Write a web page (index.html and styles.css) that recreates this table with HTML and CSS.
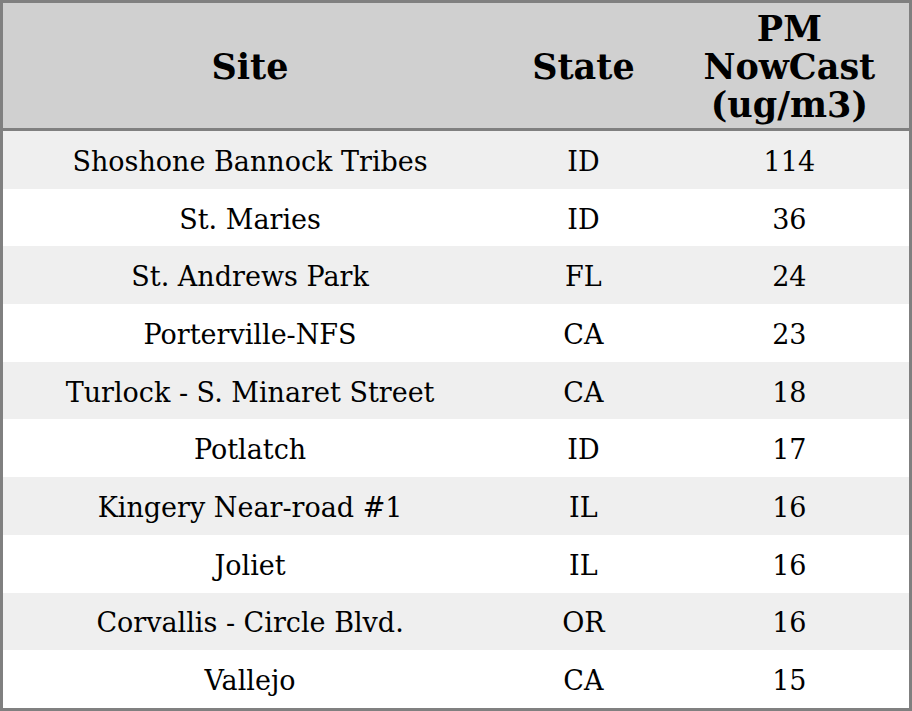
FILE: index.html
```html
<!DOCTYPE html>
<html>
<head>
<meta charset="utf-8">
<link rel="stylesheet" href="styles.css">
</head>
<body>
<table class="aq">
  <colgroup>
    <col class="c-site">
    <col class="c-state">
    <col class="c-pm">
  </colgroup>
  <thead>
    <tr><th>Site</th><th>State</th><th>PM<br>NowCast<br>(ug/m3)</th></tr>
  </thead>
  <tbody>
    <tr><td>Shoshone Bannock Tribes</td><td>ID</td><td>114</td></tr>
    <tr><td>St. Maries</td><td>ID</td><td>36</td></tr>
    <tr><td>St. Andrews Park</td><td>FL</td><td>24</td></tr>
    <tr><td>Porterville-NFS</td><td>CA</td><td>23</td></tr>
    <tr><td>Turlock - S. Minaret Street</td><td>CA</td><td>18</td></tr>
    <tr><td>Potlatch</td><td>ID</td><td>17</td></tr>
    <tr><td>Kingery Near-road #1</td><td>IL</td><td>16</td></tr>
    <tr><td>Joliet</td><td>IL</td><td>16</td></tr>
    <tr><td>Corvallis - Circle Blvd.</td><td>OR</td><td>16</td></tr>
    <tr><td>Vallejo</td><td>CA</td><td>15</td></tr>
  </tbody>
</table>
</body>
</html>
```
FILE: styles.css
```css
html, body {
  margin: 0;
  padding: 0;
  background: #ffffff;
}
.aq {
  width: 912px;
  border-collapse: collapse;
  border: 3px solid #808080;
  font-family: "DejaVu Serif", serif;
  color: #000;
  table-layout: fixed;
}
.c-site { width: 494px; }
.c-state { width: 172px; }
.c-pm { width: 240px; }
.aq th {
  background: #d0d0d0;
  font-size: 35px;
  font-weight: bold;
  line-height: 38px;
  padding: 7px 0 4px;
  text-align: center;
  vertical-align: middle;
  border-bottom: 3px solid #808080;
}
.aq td {
  font-size: 27px;
  line-height: 31px;
  padding: 3px 0 0;
  height: 54.7px;
  text-align: center;
  vertical-align: middle;
}
.aq tbody tr:nth-child(odd) td {
  background: #efefef;
}
```
